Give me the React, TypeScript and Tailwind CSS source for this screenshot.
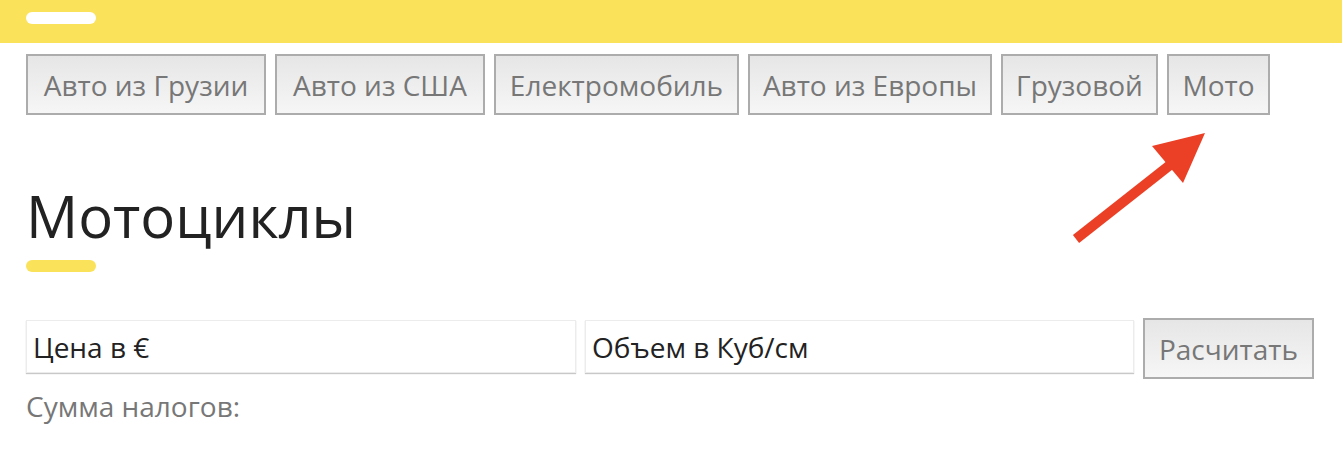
import React from "react";

const tabs: [string, string][] = [
  ["Авто из Грузии", "w-[240px]"],
  ["Авто из США", "w-[210px]"],
  ["Електромобиль", "w-[245px]"],
  ["Авто из Европы", "w-[244px]"],
  ["Грузовой", "w-[157px]"],
  ["Мото", "w-[103px]"],
];

export default function App() {
  return (
    <div className="relative w-[1342px] h-[464px] bg-white overflow-hidden" style={{ fontFamily: '"Open Sans", "Noto Sans", sans-serif' }}>
      <div className="h-[43px] bg-[#fae35a] pl-[26px] pt-[12px]">
        <div className="w-[70px] h-[12px] rounded-full bg-white" />
      </div>
      <div className="pl-[26px] pr-[20px]">
        <div className="flex gap-[9px] mt-[11px]">
          {tabs.map(([t, w]) => (
            <button
              key={t}
              className={`${w} h-[61px] px-0 border-2 border-[#acacac] bg-gradient-to-b from-[#e6e6e6] to-[#f6f6f6] text-[#777] text-[28px] leading-none whitespace-nowrap text-center`}
            >
              {t}
            </button>
          ))}
        </div>
        <h1 className="mt-[72px] text-[58px] leading-none text-[#222] font-normal">Мотоциклы</h1>
        <div className="mt-[15px] w-[70px] h-[12px] rounded-full bg-[#fae35a]" />
        <div className="mt-[46px] flex items-start gap-[9px]">
          <div className="mt-[2px] w-[550px] h-[53px] border border-[#ececec] shadow-[0_1px_1px_#c8c8c8] flex items-center px-[6px] text-[28px] text-[#222]">
            Цена в €
          </div>
          <div className="mt-[2px] w-[549px] h-[53px] border border-[#ececec] shadow-[0_1px_1px_#c8c8c8] flex items-center px-[6px] text-[28px] text-[#222]">
            Объем в Куб/см
          </div>
          <button className="w-[171px] h-[61px] border-2 border-[#acacac] bg-gradient-to-b from-[#e6e6e6] to-[#f6f6f6] text-[#777] text-[28px] leading-none whitespace-nowrap">
            Расчитать
          </button>
        </div>
        <div className="mt-[13px] text-[28px] leading-none text-[#777]">Сумма налогов:</div>
      </div>
      <svg className="absolute left-0 top-0 pointer-events-none" width="1342" height="464">
        <line x1="1076" y1="239" x2="1170" y2="165" stroke="#eb4025" strokeWidth="10" />
        <polygon points="1205,133 1152,146 1183,183" fill="#eb4025" />
      </svg>
    </div>
  );
}
